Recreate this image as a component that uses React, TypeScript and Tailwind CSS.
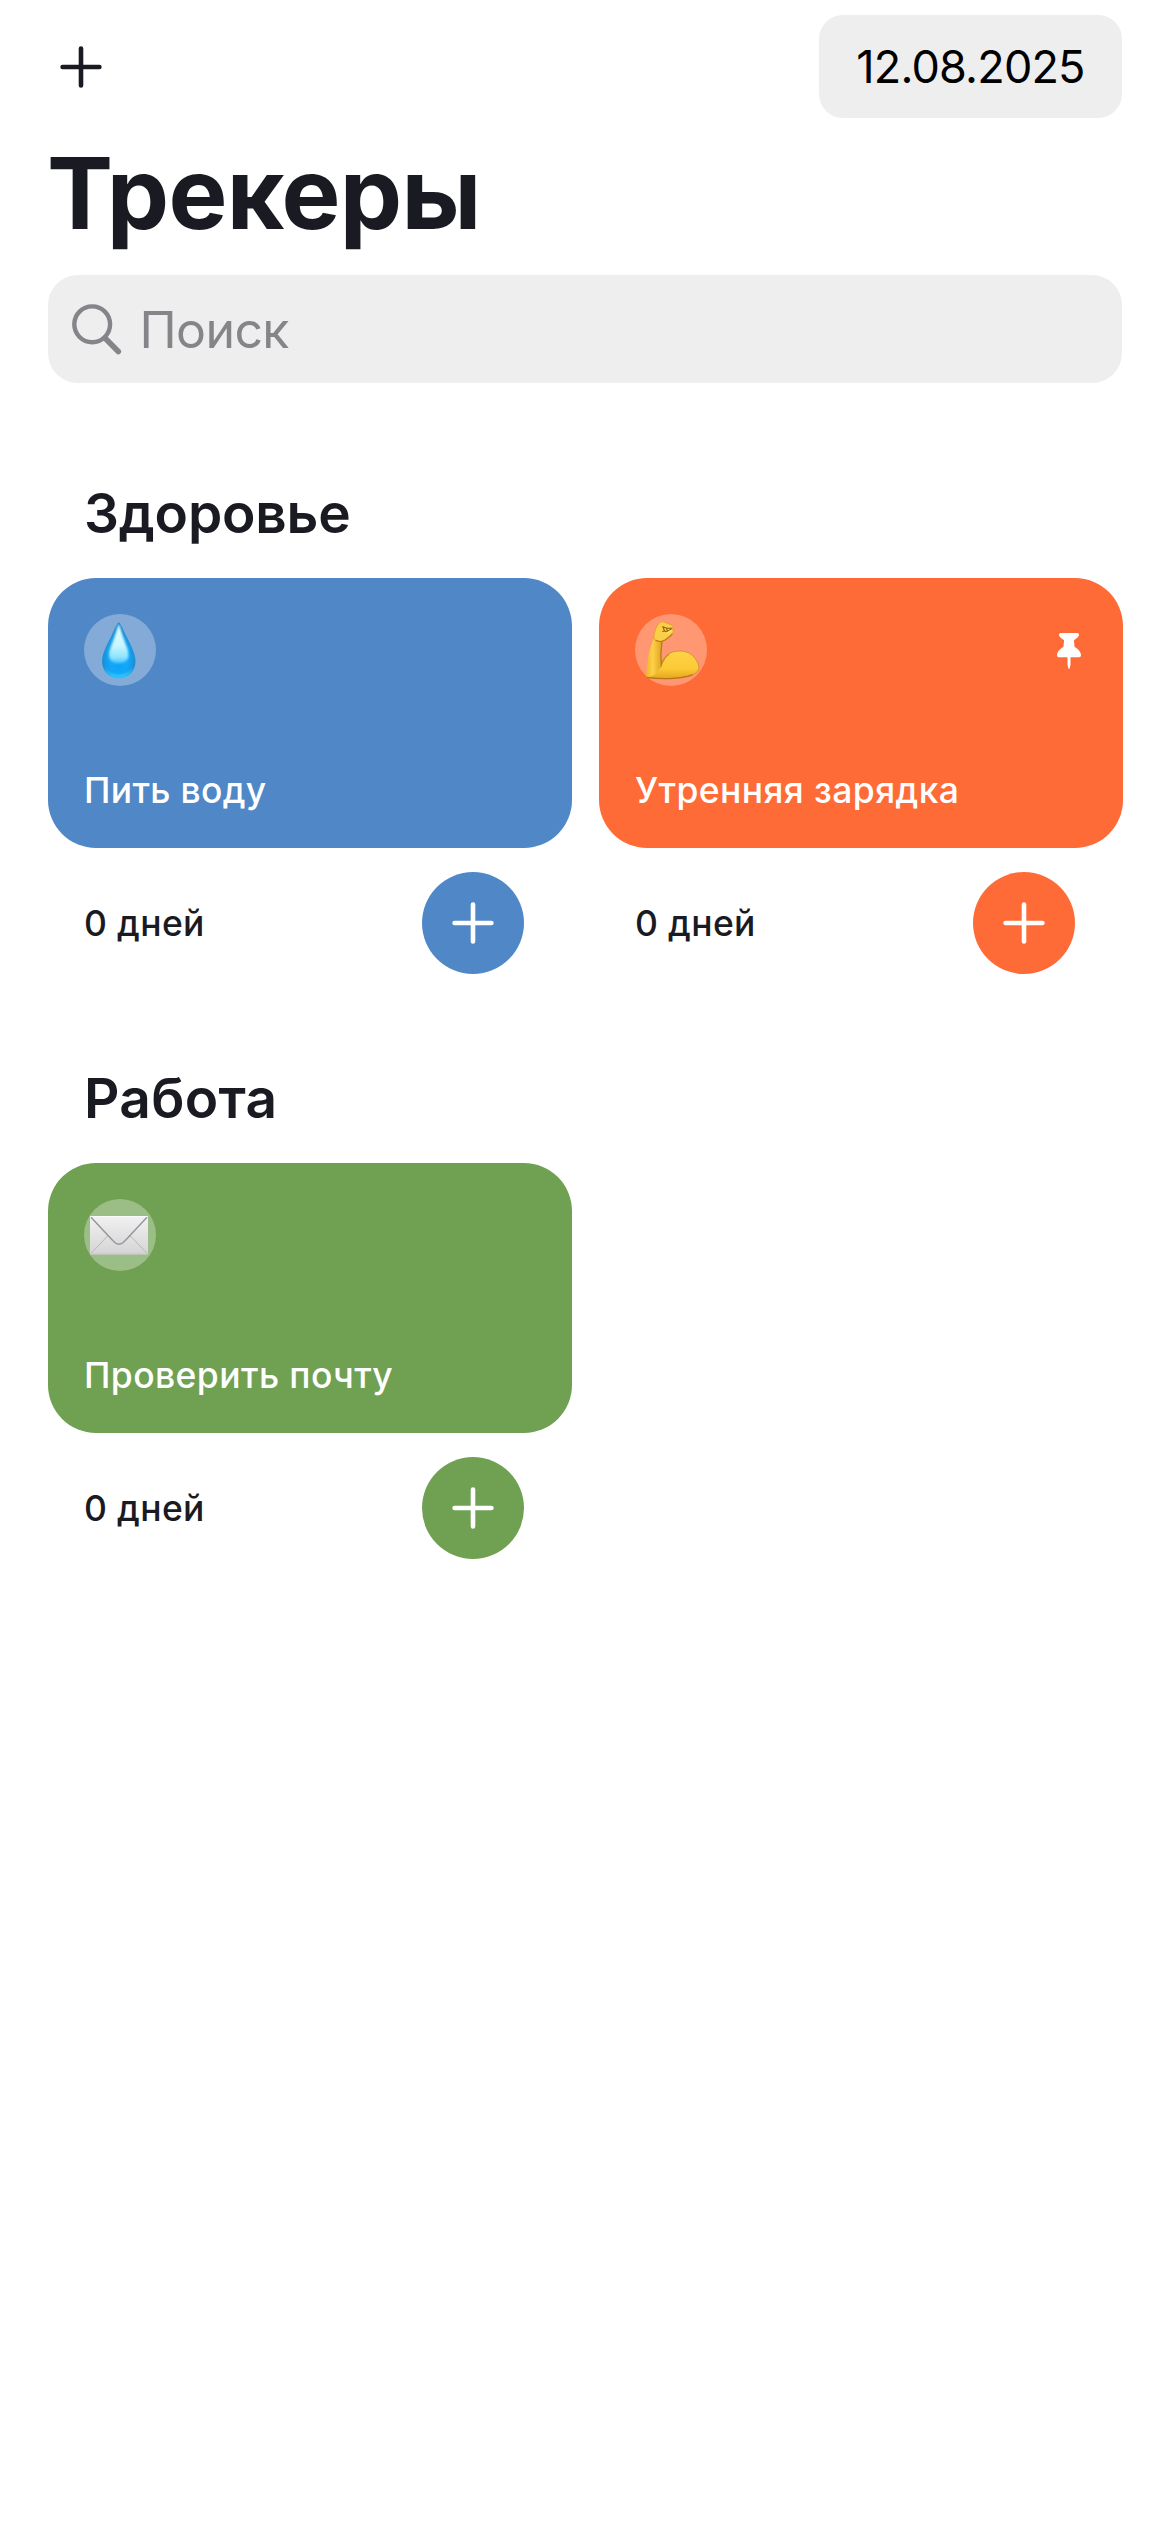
import type { ReactNode } from "react";

type Tracker = {
  name: string;
  nameSpacing: string;
  color: string;
  icon: ReactNode;
  pinned?: boolean;
};

function PlusIcon({ className }: { className: string }) {
  return (
    <svg viewBox="0 0 42 42" className={className} fill="none" stroke="currentColor" strokeWidth="4.6" strokeLinecap="round">
      <path d="M21 2.6V39.4M2.6 21H39.4" />
    </svg>
  );
}

function SearchIcon() {
  return (
    <svg viewBox="0 0 50 51" className="h-[51px] w-[50px] shrink-0" fill="none" stroke="#848489" strokeLinecap="round">
      <circle cx="20.2" cy="20.3" r="17.9" strokeWidth="4.4" />
      <path d="M33 34L46.3 47.500" strokeWidth="5.6" />
    </svg>
  );
}

function PinIcon() {
  return (
    <svg viewBox="0 0 24 36" className="h-9 w-6" fill="#fff">
      <path d="M3.6 0H20.4C21.4 0 22 .8 22 1.8C22 3.6 20 5.4 16.9 7.2L17.6 14C21.500 16 24 19.400 24 22.300C24 23.500 23.300 24.300 22 24.300H13.500V32L12.500 35.400Q12 36.400 11.500 35.400L10.500 32V24.300H2C.7 24.300 0 23.500 0 22.300C0 19.400 2.500 16 6.400 14L7.100 7.200C4 5.400 2 3.600 2 1.800C2 .8 2.600 0 3.600 0Z" />
    </svg>
  );
}

function DropIcon() {
  return (
    <svg viewBox="0 0 72 72" className="size-[72px]">
      <defs>
        <radialGradient id="dropBody" cx="0.5" cy="0.66" r="0.52">
          <stop offset="0" stopColor="#08a0f2" />
          <stop offset="0.5" stopColor="#12a8fa" />
          <stop offset="0.8" stopColor="#1798e2" />
          <stop offset="1" stopColor="#168ad0" />
        </radialGradient>
        <linearGradient id="dropShine" x1="0" y1="0" x2="0" y2="1">
          <stop offset="0" stopColor="#e2ffff" />
          <stop offset="0.55" stopColor="#c8f6ff" />
          <stop offset="0.85" stopColor="#8ae4ff" />
          <stop offset="1" stopColor="#3cbdfc" />
        </linearGradient>
        <linearGradient id="dropRim" x1="0" y1="0" x2="0" y2="1">
          <stop offset="0.3" stopColor="#35cfff" stopOpacity="0" />
          <stop offset="1" stopColor="#35cfff" />
        </linearGradient>
        <filter id="dropSoft" x="-20%" y="-20%" width="140%" height="140%">
          <feGaussianBlur stdDeviation="0.8" />
        </filter>
      </defs>
      <path d="M34.800 8.500C36.600 8.500 38.200 14 42.500 22.500C47 31.500 51.500 39.500 51.500 47.500C51.500 57.500 44.200 64 34.800 64C25.400 64 18.100 57.500 18.100 47.500C18.100 39.500 22.600 31.500 27.100 22.500C31.400 14 33 8.500 34.800 8.500Z" fill="url(#dropBody)" />
      <path d="M19.500 49C20.500 57 26.500 62.300 34.800 62.300C43.100 62.300 49.100 57 50.100 49" fill="none" stroke="url(#dropRim)" strokeWidth="2.800" filter="url(#dropSoft)" />
      <path d="M34.800 10C36.200 13 37.500 18.500 40 25.500C42.500 32.500 44.500 36 44.500 41C44.500 46.500 40.500 49.500 34.800 49.500C29.100 49.500 25.100 46.500 25.100 41C25.100 36 27.100 32.500 29.600 25.500C32.100 18.500 33.400 13 34.800 10Z" fill="url(#dropShine)" filter="url(#dropSoft)" />
    </svg>
  );
}

function BicepsIcon() {
  return (
    <svg viewBox="0 0 72 72" className="size-[72px]">
      <defs>
        <linearGradient id="armSkin" x1="0" y1="0" x2="0" y2="1">
          <stop offset="0" stopColor="#fdd348" />
          <stop offset="0.65" stopColor="#fbc936" />
          <stop offset="1" stopColor="#e5a61f" />
        </linearGradient>
        <linearGradient id="forearm" x1="0" y1="0" x2="1" y2="0">
          <stop offset="0" stopColor="#edb42b" />
          <stop offset="0.4" stopColor="#fed04a" />
          <stop offset="1" stopColor="#dfa01c" />
        </linearGradient>
        <filter id="armSoft" x="-20%" y="-20%" width="140%" height="140%">
          <feGaussianBlur stdDeviation="0.5" />
        </filter>
      </defs>
      <path d="M11.500 63.300C25 65.200 45 65.500 58 60.500C62.500 58.500 64.500 55.500 63.800 52.500C62.800 47 59 42 54.500 39.300C49 36.300 39.500 36 33.500 40C29.800 42.600 27 47 26 52L20 56Z" fill="url(#armSkin)" stroke="#c5871a" strokeWidth="0.700" />
      <path d="M20 22C16 30 13.500 39 12.300 49C11.700 54.500 11 59 11.300 63.200C16 63.500 23 60 26.800 51.500C25.800 44 26.300 34 27.300 26Z" fill="url(#forearm)" />
      <path d="M11.600 63.400C25 65.300 45 65.400 57.500 60.800" fill="none" stroke="#b9751b" strokeWidth="1.300" filter="url(#armSoft)" />
      <path d="M26.400 52.500C25.500 44 25.900 34.500 27 27" fill="none" stroke="#b47a17" strokeWidth="1.300" filter="url(#armSoft)" />
      <path d="M26.200 52C27.500 47.500 30 43 34 40.300" fill="none" stroke="#c58d1b" strokeWidth="1.100" filter="url(#armSoft)" />
      <path d="M19.200 25C18.500 19 21.300 12.500 24.200 9C25.500 8 27.500 7.500 29.500 8.200L36.800 11.200C38 12 38.400 13.300 37.500 14.500C38.500 16.500 38.300 19 36.800 20.600C34 23.500 31 25.800 28.500 27C25.500 28 21 27.500 19.200 25Z" fill="#fbcf45" stroke="#d69a20" strokeWidth="0.600" />
      <path d="M20.500 26C23.500 28.200 27 27.800 30 26C33 24 36 21.500 37.300 20" fill="none" stroke="#ba7d18" strokeWidth="1.200" filter="url(#armSoft)" />
      <path d="M27.500 12.800L31.500 14L36.800 14.300M28 13L29.500 16.800L27.800 17.500M31.500 14.300L32.500 17.300L36 15.200M29.300 17L33.500 18.500" fill="none" stroke="#8e5d13" strokeWidth="1.100" strokeLinecap="round" />
      <path d="M32 19L36.500 16.500" stroke="#ffe16a" strokeWidth="1.500" strokeLinecap="round" />
    </svg>
  );
}

function EnvelopeIcon() {
  return (
    <svg viewBox="0 0 72 72" className="size-[72px]">
      <defs>
        <linearGradient id="paper" x1="0" y1="0" x2="0" y2="1">
          <stop offset="0" stopColor="#f2f2f2" />
          <stop offset="1" stopColor="#d4d4d5" />
        </linearGradient>
        <linearGradient id="flap" x1="0" y1="0" x2="0" y2="1">
          <stop offset="0" stopColor="#f1f1f1" />
          <stop offset="1" stopColor="#dadadb" />
        </linearGradient>
      </defs>
      <rect x="6" y="17" width="58" height="38.500" rx="0.800" fill="url(#paper)" />
      <path d="M7 54.300L24 36.500M63 54.300L46 36.500" stroke="#b9b9bc" strokeWidth="1" />
      <path d="M6.500 17.500L28.500 41.200C32.500 46.500 37.500 46.500 41.500 41.200L63.500 17.500Z" fill="url(#flap)" />
      <path d="M7 18.300L28.500 41.200C32.500 46.500 37.500 46.500 41.500 41.200L63 18.300" fill="none" stroke="#9494a0" strokeWidth="1.400" />
      <path d="M6.500 17.500H63.500" stroke="#fafafa" strokeWidth="1" />
      <path d="M6.500 55H63.500" stroke="#c4c4c5" strokeWidth="1" />
    </svg>
  );
}

function TrackerCard({ tracker }: { tracker: Tracker }) {
  return (
    <article className="w-[524px]">
      <div className={`flex h-[270px] flex-col justify-between rounded-[48px] px-9 pt-9 pb-[33px] ${tracker.color}`}>
        <div className="flex items-center justify-between">
          <div className="size-[72px] rounded-full bg-white/30">{tracker.icon}</div>
          {tracker.pinned && (
            <div className="pt-px pr-[6px]">
              <PinIcon />
            </div>
          )}
        </div>
        <h3 className={`text-[35.5px] leading-[48px] font-medium whitespace-nowrap text-white ${tracker.nameSpacing}`}>
          {tracker.name}
        </h3>
      </div>
      <div className="mt-6 flex h-[102px] items-center justify-between pr-12 pl-9">
        <span className="pt-0.5 text-[35.5px] leading-[48px] font-medium tracking-[0.35px]">0 дней</span>
        <button className={`grid size-[102px] place-items-center rounded-full text-white ${tracker.color}`}>
          <PlusIcon className="size-[42px]" />
        </button>
      </div>
    </article>
  );
}

function Section({ title, spacing, trackers }: { title: string; spacing: string; trackers: Tracker[] }) {
  return (
    <section>
      <h2 className={`pl-9 text-[55px] leading-[60px] font-semibold ${spacing}`}>{title}</h2>
      <div className="mt-[35px] flex gap-[27px]">
        {trackers.map((t) => (
          <TrackerCard key={t.name} tracker={t} />
        ))}
      </div>
    </section>
  );
}

const health: Tracker[] = [
  { name: "Пить воду", nameSpacing: "tracking-[0.3px]", color: "bg-[#5087c7]", icon: <DropIcon /> },
  { name: "Утренняя зарядка", nameSpacing: "tracking-[0.4px]", color: "bg-[#ff6b37]", icon: <BicepsIcon />, pinned: true },
];

const work: Tracker[] = [
  { name: "Проверить почту", nameSpacing: "tracking-[0.4px]", color: "bg-[#70a152]", icon: <EnvelopeIcon /> },
];

export default function App() {
  return (
    <main className="flex min-h-[2532px] w-[1170px] flex-col bg-white pt-[15px] pl-12 font-['Inter',sans-serif] text-[#1a1b22]">
      <header className="flex h-[103px] items-center justify-between pr-12 pl-[11.5px]">
        <button>
          <PlusIcon className="size-[42px]" />
        </button>
        <div className="flex h-[103px] w-[303px] items-center justify-center rounded-[24px] bg-[#eeeeee] pt-px text-[45px] leading-[60px] tracking-[-0.8px] whitespace-nowrap text-black">
          12.08.2025
        </div>
      </header>
      <h1 className="mt-[15px] -ml-px text-[99px] leading-[120px] font-bold tracking-[-0.7px]">Трекеры</h1>
      <div className="mt-[22px] flex h-[108px] w-[1074px] items-center gap-[17.5px] rounded-[30px] bg-[#eeeeee] pl-6">
        <SearchIcon />
        <span className="pt-0.5 text-[50px] leading-[60px] tracking-[-0.6px] text-[#848489]">Поиск</span>
      </div>
      <div className="mt-[100px] flex flex-col gap-[94px]">
        <Section title="Здоровье" spacing="tracking-[-0.2px]" trackers={health} />
        <Section title="Работа" spacing="tracking-[0.3px]" trackers={work} />
      </div>
    </main>
  );
}
